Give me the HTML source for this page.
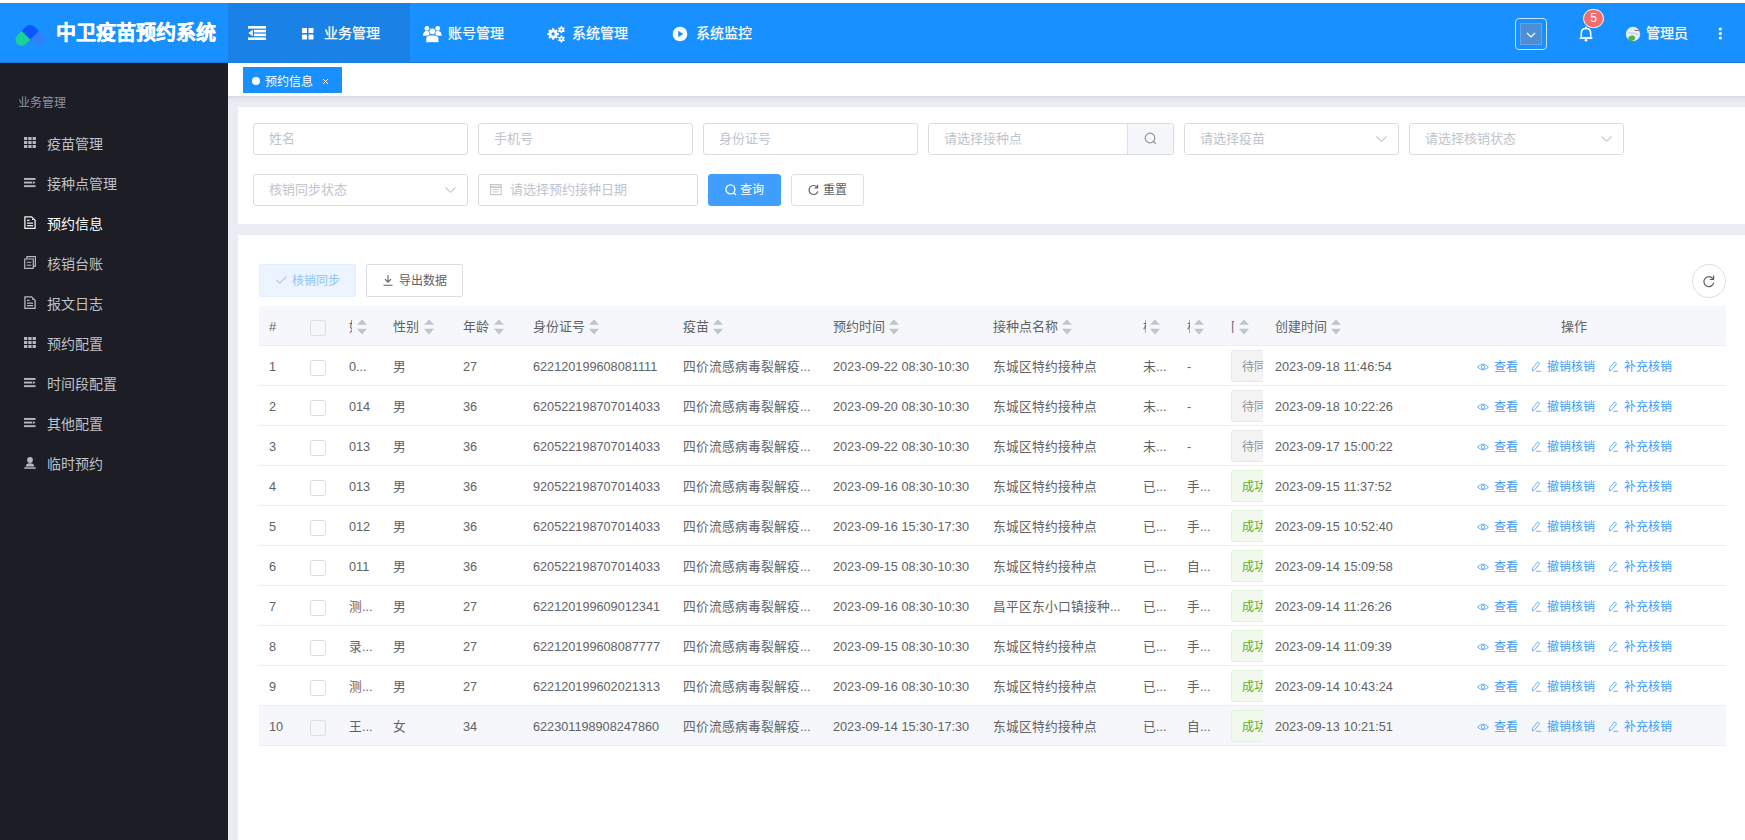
<!DOCTYPE html><html lang="zh-CN"><head><meta charset="utf-8"><style>
*{box-sizing:border-box;margin:0;padding:0}
html,body{width:1745px;height:840px;overflow:hidden;background:#fff;font-family:"Liberation Sans",sans-serif;color:#606266}
.a{position:absolute}
svg{position:absolute;overflow:visible}
#header{position:absolute;left:0;top:3px;width:1745px;height:60px;background:#1890ff;border-bottom:1px solid #1878d8}
#sidebar{position:absolute;left:0;top:63px;width:228px;height:777px;background:#1c1d25}
#tabs{position:absolute;left:228px;top:63px;width:1517px;height:33px;background:#fff}
#main{position:absolute;left:228px;top:96px;width:1517px;height:744px;background:linear-gradient(#d6d9e0 0px,#e3e6ee 3px,#eaedf4 8px,#eaedf4 100%)}
.card{position:absolute;background:#fff}
.nav{position:absolute;top:0;height:60px;color:#fff;font-size:14px;line-height:60px;white-space:nowrap;-webkit-text-stroke:0.25px #fff}
.si{position:absolute;left:0;width:228px;height:40px;line-height:40px;font-size:14px;color:#bfc2c9}
.si .t{position:absolute;left:47px;top:0.5px}
.inp{position:absolute;height:32px;border:1px solid #dadcdf;border-radius:3px;background:#fff;font-size:13px;color:#c0c4cc;line-height:30px;padding-left:15px;white-space:nowrap}
.btn{position:absolute;height:32px;border-radius:3px;font-size:12.5px;line-height:30px;white-space:nowrap}
.tx{position:absolute;white-space:nowrap;font-size:12.7px;line-height:16px;color:#606266}
.th{position:absolute;white-space:nowrap;font-size:13px;line-height:16px;color:#606266}
.hl{position:absolute;left:259px;width:1467px;height:1px;background:#ebeef5}
.cb{position:absolute;width:16px;height:16px;border:1.5px solid #dcdde0;border-radius:2.5px;background:transparent}
.tag{position:absolute;height:32px;border-radius:4px;font-size:12px;line-height:33px;padding-left:10px;white-space:nowrap;overflow:hidden}
.clip{position:absolute;overflow:hidden;white-space:nowrap}
.lk{position:absolute;white-space:nowrap;font-size:12px;line-height:16px;color:#409eff}
</style></head><body>
<div id="header">
<svg style="left:0px;top:-3px" width="50" height="50" viewBox="0 0 50 50">
<path d="M38.8 31 L30.3 39.5 L34.9 44.1 A6 6 0 0 0 43.4 35.6 Z" fill="#6a5cf0" opacity="0.3"/>
<path d="M21.8 31 L30.3 39.5 L25.7 44.1 A6 6 0 0 1 17.2 35.6 Z" fill="#17d39b"/>
<path d="M30.3 39.5 L21.8 31 L26.06 26.74 A6 6 0 0 1 34.54 26.74 L38.8 31 Z" fill="#0a56ff"/>
</svg>
<div class="a" style="left:56px;top:0;height:60px;line-height:60px;color:#fff;font-size:20px;font-weight:bold;-webkit-text-stroke:0.4px #fff">中卫疫苗预约系统</div>
<div class="a" style="left:228px;top:0;width:182px;height:60px;background:#1a82e6"></div>
<svg style="left:248px;top:23px" width="18" height="14" viewBox="0 0 18 14" fill="#fff">
<rect x="0" y="0" width="18" height="2.6"/><rect x="6" y="3.8" width="12" height="2.6"/><rect x="6" y="7.6" width="12" height="2.6"/><rect x="0" y="11.4" width="18" height="2.6"/>
<path d="M4.8 3.8 L0.3 7 L4.8 10.2Z"/></svg>
<svg style="left:302px;top:25px" width="12" height="12" viewBox="0 0 12 12" fill="#fff">
<rect x="0" y="0" width="5" height="5" rx=".6"/><rect x="6.5" y="0" width="5" height="5" rx=".6"/><rect x="0" y="6.5" width="5" height="5" rx=".6"/><rect x="6.5" y="6.5" width="5" height="5" rx=".6"/></svg>
<div class="nav" style="left:324px">业务管理</div>
<svg style="left:423px;top:22px" width="19" height="18" viewBox="0 0 19 18" fill="#fff">
<circle cx="3.9" cy="3.4" r="2.4"/><circle cx="14.7" cy="3.4" r="2.4"/>
<path d="M0 10.7 Q0 5.9 3.9 5.9 Q5.6 5.9 6.4 7 L6.4 10.7Z"/>
<path d="M18.7 10.7 Q18.7 5.9 14.8 5.9 Q13.1 5.9 12.3 7 L12.3 10.7Z"/>
<circle cx="9.35" cy="6.4" r="3.3" stroke="#1890ff" stroke-width="0.7"/>
<path d="M2.9 17.6 L2.9 13.8 Q2.9 10.1 9.35 10.1 Q15.8 10.1 15.8 13.8 L15.8 17.6Z" stroke="#1890ff" stroke-width="0.7"/>
</svg>
<div class="nav" style="left:448px">账号管理</div>
<svg style="left:547px;top:22px" width="18" height="18" viewBox="0 0 18 18" fill="#fff">
<g transform="translate(6.1 9)"><circle r="4.3"/><rect x="-1.15" y="-5.7" width="2.3" height="11.4" transform="rotate(0)"/><rect x="-1.15" y="-5.7" width="2.3" height="11.4" transform="rotate(45)"/><rect x="-1.15" y="-5.7" width="2.3" height="11.4" transform="rotate(90)"/><rect x="-1.15" y="-5.7" width="2.3" height="11.4" transform="rotate(135)"/><circle r="1.7" fill="#1890ff"/></g>
<g transform="translate(14.4 4.7)"><circle r="2.5"/><rect x="-0.75" y="-3.6" width="1.5" height="7.2" transform="rotate(0)"/><rect x="-0.75" y="-3.6" width="1.5" height="7.2" transform="rotate(60)"/><rect x="-0.75" y="-3.6" width="1.5" height="7.2" transform="rotate(120)"/><circle r="0.9" fill="#1890ff"/></g><g transform="translate(14.4 13.9)"><circle r="2.5"/><rect x="-0.75" y="-3.6" width="1.5" height="7.2" transform="rotate(0)"/><rect x="-0.75" y="-3.6" width="1.5" height="7.2" transform="rotate(60)"/><rect x="-0.75" y="-3.6" width="1.5" height="7.2" transform="rotate(120)"/><circle r="0.9" fill="#1890ff"/></g>
</svg>
<div class="nav" style="left:572px">系统管理</div>
<svg style="left:672px;top:23px" width="16" height="16" viewBox="0 0 16 16">
<circle cx="8" cy="8" r="7.3" fill="#fff"/><path d="M6.2 4.8 L11.2 8 L6.2 11.2Z" fill="#1890ff"/></svg>
<div class="nav" style="left:696px">系统监控</div>
<div class="a" style="left:1515px;top:15px;width:32px;height:32px;border:1px solid #c6e2ff;border-radius:4px"></div>
<div class="a" style="left:1520px;top:20px;width:22px;height:22px;background:#4d8fd6;border:1px solid #6aa3e0"></div>
<svg style="left:1526px;top:29px" width="10" height="6" viewBox="0 0 10 6"><path d="M1 1 L5 5 L9 1" stroke="#fff" stroke-width="1.2" fill="none"/></svg>
<svg style="left:1579px;top:23px" width="14" height="16" viewBox="0 0 14 16" fill="none" stroke="#fff" stroke-width="1.5">
<path d="M2.3 12 L2.3 7.2 Q2.3 2.5 7 2.5 Q11.7 2.5 11.7 7.2 L11.7 12Z" stroke-linejoin="round"/><path d="M0.6 12.3 L13.4 12.3"/>
<circle cx="7" cy="14.2" r="1.3" fill="#fff" stroke="none"/><circle cx="7" cy="1.6" r="1" fill="#fff" stroke="none"/></svg>
<div class="a" style="left:1583px;top:6px;width:21px;height:19px;border-radius:10px;background:#f56c6c;border:1px solid #fff;color:#fff;font-size:12px;line-height:17px;text-align:center">5</div>
<svg style="left:1625px;top:23px" width="16" height="16" viewBox="0 0 16 16">
<circle cx="8" cy="8" r="7.2" fill="#e6f0fb"/><path d="M2.6 7 Q8 6.5 14 8.5" stroke="#cfd3f0" stroke-width="1.6" fill="none"/><path d="M3.2 12.5 Q4 9 8 9.5 Q10.5 10 10 13 Q8.5 15.5 5.5 15 Q3.8 14.3 3.2 12.5Z" fill="#4cb53a"/>
<path d="M9.5 4.3 L14 4.6" stroke="#8a6a50" stroke-width="1" fill="none"/></svg>
<div class="a" style="left:1646px;top:0;height:60px;line-height:60px;color:#fff;font-size:14px;-webkit-text-stroke:0.25px #fff">管理员</div>
<svg style="left:1718px;top:23px" width="5" height="15" viewBox="0 0 5 15" fill="#fff"><circle cx="2.3" cy="3" r="1.6"/><circle cx="2.3" cy="7.5" r="1.6"/><circle cx="2.3" cy="12" r="1.6"/></svg>
</div>
<div id="sidebar">
<div class="a" style="left:18px;top:30px;font-size:12px;color:#8f929a;line-height:20px">业务管理</div>
<div class="si" style="top:60px;color:#bfc2c9"><span class="t">疫苗管理</span>
<svg style="left:24px;top:14px" width="12" height="11" viewBox="0 0 12 11" fill="#b5b8bf"><rect x="0" y="0" width="3.3" height="3" /><rect x="4.3" y="0" width="3.3" height="3"/><rect x="8.6" y="0" width="3.3" height="3"/><rect x="0" y="4" width="3.3" height="3"/><rect x="4.3" y="4" width="3.3" height="3"/><rect x="8.6" y="4" width="3.3" height="3"/><rect x="0" y="8" width="3.3" height="3"/><rect x="4.3" y="8" width="3.3" height="3"/><rect x="8.6" y="8" width="3.3" height="3"/></svg>
</div>
<div class="si" style="top:100px;color:#bfc2c9"><span class="t">接种点管理</span>
<svg style="left:24px;top:15px" width="12" height="10" viewBox="0 0 12 10" fill="#b5b8bf"><rect x="0" y="0" width="11.5" height="1.9"/><rect x="0" y="3.6" width="8.3" height="1.9"/><path d="M9 3.2 L11.6 4.55 L9 5.9Z"/><rect x="0" y="7.2" width="11.5" height="1.9"/></svg>
</div>
<div class="si" style="top:140px;color:#fff"><span class="t">预约信息</span>
<svg style="left:24px;top:13px" width="12" height="13" viewBox="0 0 12 13" fill="none" stroke="#f0f0f0" stroke-width="1.3"><path d="M0.9 0.8 H7.6 L11.1 4.3 V12.3 H0.9Z"/><path d="M3 4.3 H5.6 M3 7.1 H9 M3 9.6 H9" stroke-width="1.2"/><circle cx="8.6" cy="3.4" r="0.6" fill="#f0f0f0" stroke="none"/></svg>
</div>
<div class="si" style="top:180px;color:#bfc2c9"><span class="t">核销台账</span>
<svg style="left:24px;top:13px" width="12" height="13" viewBox="0 0 12 13" fill="none" stroke="#b5b8bf" stroke-width="1.2"><path d="M0.7 3 H9.3 V12.3 H0.7Z"/><path d="M2.9 3 V0.7 H11.4 V10.2 H9.3"/><path d="M2.7 6.3 H7.3 M2.7 9.2 H7.3" stroke-width="1"/></svg>
</div>
<div class="si" style="top:220px;color:#bfc2c9"><span class="t">报文日志</span>
<svg style="left:24px;top:13px" width="12" height="13" viewBox="0 0 12 13" fill="none" stroke="#b5b8bf" stroke-width="1.3"><path d="M0.9 0.8 H7.6 L11.1 4.3 V12.3 H0.9Z"/><path d="M3 4.3 H5.6 M3 7.1 H9 M3 9.6 H9" stroke-width="1.2"/><circle cx="8.6" cy="3.4" r="0.6" fill="#b5b8bf" stroke="none"/></svg>
</div>
<div class="si" style="top:260px;color:#bfc2c9"><span class="t">预约配置</span>
<svg style="left:24px;top:14px" width="12" height="11" viewBox="0 0 12 11" fill="#b5b8bf"><rect x="0" y="0" width="3.3" height="3" /><rect x="4.3" y="0" width="3.3" height="3"/><rect x="8.6" y="0" width="3.3" height="3"/><rect x="0" y="4" width="3.3" height="3"/><rect x="4.3" y="4" width="3.3" height="3"/><rect x="8.6" y="4" width="3.3" height="3"/><rect x="0" y="8" width="3.3" height="3"/><rect x="4.3" y="8" width="3.3" height="3"/><rect x="8.6" y="8" width="3.3" height="3"/></svg>
</div>
<div class="si" style="top:300px;color:#bfc2c9"><span class="t">时间段配置</span>
<svg style="left:24px;top:15px" width="12" height="10" viewBox="0 0 12 10" fill="#b5b8bf"><rect x="0" y="0" width="11.5" height="1.9"/><rect x="0" y="3.6" width="8.3" height="1.9"/><path d="M9 3.2 L11.6 4.55 L9 5.9Z"/><rect x="0" y="7.2" width="11.5" height="1.9"/></svg>
</div>
<div class="si" style="top:340px;color:#bfc2c9"><span class="t">其他配置</span>
<svg style="left:24px;top:15px" width="12" height="10" viewBox="0 0 12 10" fill="#b5b8bf"><rect x="0" y="0" width="11.5" height="1.9"/><rect x="0" y="3.6" width="8.3" height="1.9"/><path d="M9 3.2 L11.6 4.55 L9 5.9Z"/><rect x="0" y="7.2" width="11.5" height="1.9"/></svg>
</div>
<div class="si" style="top:380px;color:#bfc2c9"><span class="t">临时预约</span>
<svg style="left:24px;top:14px" width="12" height="12" viewBox="0 0 12 12" fill="#b5b8bf"><circle cx="6" cy="3" r="2.9"/><path d="M1.8 9.6 Q1.8 6.3 6 6.3 Q10.2 6.3 10.2 9.6Z"/><rect x="0.3" y="10.3" width="11.4" height="1.5"/></svg>
</div>
</div>
<div id="tabs">
<div class="a" style="left:15px;top:4px;width:99px;height:26px;background:#1890ff"></div>
<div class="a" style="left:24px;top:14px;width:8px;height:8px;border-radius:50%;background:#fff"></div>
<div class="a" style="left:37px;top:7px;height:25px;line-height:25px;color:#fff;font-size:12px">预约信息</div>
<svg style="left:95px;top:16px" width="5" height="5" viewBox="0 0 5 5" stroke="#fff" stroke-width="1"><path d="M0 0 L5 5 M5 0 L0 5"/></svg>
</div>
<div id="main"></div>
<div class="card" style="left:238px;top:107px;width:1507px;height:117px"></div>
<div class="card" style="left:238px;top:235px;width:1507px;height:605px"></div>
<div class="inp" style="left:253px;top:123px;width:215px">姓名</div>
<div class="inp" style="left:478px;top:123px;width:215px">手机号</div>
<div class="inp" style="left:703px;top:123px;width:215px">身份证号</div>
<div class="inp" style="left:928px;top:123px;width:246px;">请选择接种点</div>
<div class="a" style="left:1127px;top:124px;width:46px;height:30px;background:#f5f7fa;border-left:1px solid #dcdfe6;border-radius:0 4px 4px 0"></div>
<svg style="left:1144px;top:132px" width="13" height="13" viewBox="0 0 13 13" fill="none" stroke="#909399" stroke-width="1.2"><circle cx="6" cy="6" r="4.8"/><path d="M9.5 9.5 L11.8 11.8"/></svg>
<div class="inp" style="left:1184px;top:123px;width:215px">请选择疫苗</div>
<svg style="left:1376px;top:136px" width="11" height="6" viewBox="0 0 11 6"><path d="M0.5 0.5 L5.5 5.3 L10.5 0.5" stroke="#c0c4cc" stroke-width="1.1" fill="none"/></svg>
<div class="inp" style="left:1409px;top:123px;width:215px">请选择核销状态</div>
<svg style="left:1601px;top:136px" width="11" height="6" viewBox="0 0 11 6"><path d="M0.5 0.5 L5.5 5.3 L10.5 0.5" stroke="#c0c4cc" stroke-width="1.1" fill="none"/></svg>
<div class="inp" style="left:253px;top:174px;width:215px">核销同步状态</div>
<svg style="left:445px;top:187px" width="11" height="6" viewBox="0 0 11 6"><path d="M0.5 0.5 L5.5 5.3 L10.5 0.5" stroke="#c0c4cc" stroke-width="1.1" fill="none"/></svg>
<div class="inp" style="left:478px;top:174px;width:220px;padding-left:31px">请选择预约接种日期</div>
<svg style="left:490px;top:184px" width="12" height="12" viewBox="0 0 12 12" fill="none" stroke="#c0c4cc" stroke-width="1.1"><rect x="0.6" y="0.6" width="10.6" height="10"/><path d="M0.6 3.2 H11.2" stroke-width="1.6"/><path d="M2.8 5.6 H9 M2.8 7.9 H9" stroke-width="0.9"/></svg>
<div class="btn" style="left:708px;top:174px;width:73px;background:#409eff;border:1px solid #409eff;color:#fff"></div>
<svg style="left:725px;top:184px" width="12" height="12" viewBox="0 0 12 12" fill="none" stroke="#fff" stroke-width="1.3"><circle cx="5.4" cy="5.4" r="4.5"/><path d="M8.7 8.7 L11 11"/></svg>
<div class="a" style="left:740px;top:174px;height:32px;line-height:32px;color:#fff;font-size:12px">查询</div>
<div class="btn" style="left:791px;top:174px;width:73px;background:#fff;border:1px solid #dcdfe6"></div>
<svg style="left:808px;top:184px" width="11" height="12" viewBox="0 0 11 12" fill="none" stroke="#606266" stroke-width="1.2"><path d="M9.3 3.5 A4.5 4.5 0 1 0 9.8 7.5"/><path d="M9.6 0.8 L9.6 3.8 L6.6 3.8" /></svg>
<div class="a" style="left:823px;top:174px;height:32px;line-height:32px;color:#606266;font-size:12px">重置</div>
<div class="btn" style="left:259px;top:264px;width:97px;height:33px;background:#ecf5ff;border:1px solid #e3effc;border-radius:2px"></div>
<svg style="left:276px;top:276px" width="11" height="8" viewBox="0 0 11 8" fill="none" stroke="#c0c8d4" stroke-width="1.2"><path d="M0.5 4 L3.8 7.2 L10.5 0.5"/></svg>
<div class="a" style="left:292px;top:265px;height:33px;line-height:33px;color:#8fc3f7;font-size:12px">核销同步</div>
<div class="btn" style="left:366px;top:264px;width:97px;height:33px;background:#fff;border:1px solid #dcdfe6;border-radius:2px"></div>
<svg style="left:383px;top:275px" width="10" height="11" viewBox="0 0 10 11" fill="none" stroke="#606266" stroke-width="1.1"><path d="M5 0 V7 M2 4.2 L5 7.2 L8 4.2 M0.5 10.3 H9.5"/></svg>
<div class="a" style="left:399px;top:265px;height:33px;line-height:33px;color:#606266;font-size:12px">导出数据</div>
<div class="a" style="left:1692px;top:264px;width:34px;height:34px;border:1px solid #dcdfe6;border-radius:50%;background:#fff"></div>
<svg style="left:1703px;top:275px" width="12" height="12" viewBox="0 0 12 12" fill="none" stroke="#606266" stroke-width="1.2"><path d="M10.3 4.2 A5 5 0 1 0 10.8 7.6"/><path d="M10.6 0.6 L10.6 4.4 L6.8 4.4"/></svg>
<div class="a" style="left:259px;top:306px;width:1467px;height:40px;background:#f5f7fa"></div>
<div class="a" style="left:259px;top:705px;width:1467px;height:40px;background:#f5f7fa"></div>
<div class="hl" style="top:345px"></div>
<div class="hl" style="top:385px"></div>
<div class="hl" style="top:425px"></div>
<div class="hl" style="top:465px"></div>
<div class="hl" style="top:505px"></div>
<div class="hl" style="top:545px"></div>
<div class="hl" style="top:585px"></div>
<div class="hl" style="top:625px"></div>
<div class="hl" style="top:665px"></div>
<div class="hl" style="top:705px"></div>
<div class="hl" style="top:745px"></div>
<div class="th" style="left:269px;top:319px">#</div>
<div class="cb" style="left:310px;top:320px"></div>
<div class="clip th" style="left:349px;top:319px;width:3px">姓名</div>
<svg style="left:357px;top:318px" width="10" height="16" viewBox="0 0 10 16" fill="#c0c4cc"><path d="M0 6.8 L5 1.4 L10 6.8Z"/><path d="M0 10.8 L5 16.6 L10 10.8Z"/></svg>
<div class="th" style="left:393px;top:319px">性别</div>
<svg style="left:424px;top:318px" width="10" height="16" viewBox="0 0 10 16" fill="#c0c4cc"><path d="M0 6.8 L5 1.4 L10 6.8Z"/><path d="M0 10.8 L5 16.6 L10 10.8Z"/></svg>
<div class="th" style="left:463px;top:319px">年龄</div>
<svg style="left:494px;top:318px" width="10" height="16" viewBox="0 0 10 16" fill="#c0c4cc"><path d="M0 6.8 L5 1.4 L10 6.8Z"/><path d="M0 10.8 L5 16.6 L10 10.8Z"/></svg>
<div class="th" style="left:533px;top:319px">身份证号</div>
<svg style="left:589px;top:318px" width="10" height="16" viewBox="0 0 10 16" fill="#c0c4cc"><path d="M0 6.8 L5 1.4 L10 6.8Z"/><path d="M0 10.8 L5 16.6 L10 10.8Z"/></svg>
<div class="th" style="left:683px;top:319px">疫苗</div>
<svg style="left:713px;top:318px" width="10" height="16" viewBox="0 0 10 16" fill="#c0c4cc"><path d="M0 6.8 L5 1.4 L10 6.8Z"/><path d="M0 10.8 L5 16.6 L10 10.8Z"/></svg>
<div class="th" style="left:833px;top:319px">预约时间</div>
<svg style="left:889px;top:318px" width="10" height="16" viewBox="0 0 10 16" fill="#c0c4cc"><path d="M0 6.8 L5 1.4 L10 6.8Z"/><path d="M0 10.8 L5 16.6 L10 10.8Z"/></svg>
<div class="th" style="left:993px;top:319px">接种点名称</div>
<svg style="left:1062px;top:318px" width="10" height="16" viewBox="0 0 10 16" fill="#c0c4cc"><path d="M0 6.8 L5 1.4 L10 6.8Z"/><path d="M0 10.8 L5 16.6 L10 10.8Z"/></svg>
<div class="th" style="left:1275px;top:319px">创建时间</div>
<svg style="left:1331px;top:318px" width="10" height="16" viewBox="0 0 10 16" fill="#c0c4cc"><path d="M0 6.8 L5 1.4 L10 6.8Z"/><path d="M0 10.8 L5 16.6 L10 10.8Z"/></svg>
<div class="clip th" style="left:1143px;top:319px;width:3px">核销</div>
<svg style="left:1150px;top:318px" width="10" height="16" viewBox="0 0 10 16" fill="#c0c4cc"><path d="M0 6.8 L5 1.4 L10 6.8Z"/><path d="M0 10.8 L5 16.6 L10 10.8Z"/></svg>
<div class="clip th" style="left:1187px;top:319px;width:3px">核销</div>
<svg style="left:1194px;top:318px" width="10" height="16" viewBox="0 0 10 16" fill="#c0c4cc"><path d="M0 6.8 L5 1.4 L10 6.8Z"/><path d="M0 10.8 L5 16.6 L10 10.8Z"/></svg>
<div class="clip th" style="left:1231px;top:319px;width:3px">同步</div>
<svg style="left:1239px;top:318px" width="10" height="16" viewBox="0 0 10 16" fill="#c0c4cc"><path d="M0 6.8 L5 1.4 L10 6.8Z"/><path d="M0 10.8 L5 16.6 L10 10.8Z"/></svg>
<div class="th" style="left:1561px;top:319px">操作</div>
<div class="tx" style="left:269px;top:359px">1</div>
<div class="cb" style="left:310px;top:360px"></div>
<div class="tx" style="left:349px;top:359px">0...</div>
<div class="tx" style="left:393px;top:359px">男</div>
<div class="tx" style="left:463px;top:359px">27</div>
<div class="tx" style="left:533px;top:359px">622120199608081111</div>
<div class="tx" style="left:683px;top:359px">四价流感病毒裂解疫...</div>
<div class="tx" style="left:833px;top:359px">2023-09-22 08:30-10:30</div>
<div class="tx" style="left:993px;top:359px">东城区特约接种点</div>
<div class="tx" style="left:1143px;top:359px">未...</div>
<div class="tx" style="left:1187px;top:359px">-</div>
<div class="tag" style="left:1231px;top:350px;width:32px;background:#f4f4f5;border:1px solid #e9e9eb;border-right:0;color:#909399;border-radius:3px 0 0 3px">待同步</div>
<div class="tx" style="left:1275px;top:359px">2023-09-18 11:46:54</div>
<svg style="left:1477px;top:363px" width="12" height="8" viewBox="0 0 12 8" fill="none" stroke="#5aa9f7" stroke-width="0.9"><path d="M0.5 4 Q6 -1.6 11.5 4 Q6 9.6 0.5 4Z"/><circle cx="6" cy="4" r="1.8"/></svg>
<div class="lk" style="left:1494px;top:359px">查看</div>
<svg style="left:1531px;top:361px" width="11" height="11" viewBox="0 0 11 11" fill="none" stroke="#5aa9f7" stroke-width="0.9" stroke-linejoin="round"><path d="M1.3 10 L1.5 7.2 L6.6 0.9 L8.7 2.6 L3.6 8.9Z"/><path d="M5.2 10.3 H10.2"/></svg>
<div class="lk" style="left:1547px;top:359px">撤销核销</div>
<svg style="left:1608px;top:361px" width="11" height="11" viewBox="0 0 11 11" fill="none" stroke="#5aa9f7" stroke-width="0.9" stroke-linejoin="round"><path d="M1.3 10 L1.5 7.2 L6.6 0.9 L8.7 2.6 L3.6 8.9Z"/><path d="M5.2 10.3 H10.2"/></svg>
<div class="lk" style="left:1624px;top:359px">补充核销</div>
<div class="tx" style="left:269px;top:399px">2</div>
<div class="cb" style="left:310px;top:400px"></div>
<div class="tx" style="left:349px;top:399px">014</div>
<div class="tx" style="left:393px;top:399px">男</div>
<div class="tx" style="left:463px;top:399px">36</div>
<div class="tx" style="left:533px;top:399px">620522198707014033</div>
<div class="tx" style="left:683px;top:399px">四价流感病毒裂解疫...</div>
<div class="tx" style="left:833px;top:399px">2023-09-20 08:30-10:30</div>
<div class="tx" style="left:993px;top:399px">东城区特约接种点</div>
<div class="tx" style="left:1143px;top:399px">未...</div>
<div class="tx" style="left:1187px;top:399px">-</div>
<div class="tag" style="left:1231px;top:390px;width:32px;background:#f4f4f5;border:1px solid #e9e9eb;border-right:0;color:#909399;border-radius:3px 0 0 3px">待同步</div>
<div class="tx" style="left:1275px;top:399px">2023-09-18 10:22:26</div>
<svg style="left:1477px;top:403px" width="12" height="8" viewBox="0 0 12 8" fill="none" stroke="#5aa9f7" stroke-width="0.9"><path d="M0.5 4 Q6 -1.6 11.5 4 Q6 9.6 0.5 4Z"/><circle cx="6" cy="4" r="1.8"/></svg>
<div class="lk" style="left:1494px;top:399px">查看</div>
<svg style="left:1531px;top:401px" width="11" height="11" viewBox="0 0 11 11" fill="none" stroke="#5aa9f7" stroke-width="0.9" stroke-linejoin="round"><path d="M1.3 10 L1.5 7.2 L6.6 0.9 L8.7 2.6 L3.6 8.9Z"/><path d="M5.2 10.3 H10.2"/></svg>
<div class="lk" style="left:1547px;top:399px">撤销核销</div>
<svg style="left:1608px;top:401px" width="11" height="11" viewBox="0 0 11 11" fill="none" stroke="#5aa9f7" stroke-width="0.9" stroke-linejoin="round"><path d="M1.3 10 L1.5 7.2 L6.6 0.9 L8.7 2.6 L3.6 8.9Z"/><path d="M5.2 10.3 H10.2"/></svg>
<div class="lk" style="left:1624px;top:399px">补充核销</div>
<div class="tx" style="left:269px;top:439px">3</div>
<div class="cb" style="left:310px;top:440px"></div>
<div class="tx" style="left:349px;top:439px">013</div>
<div class="tx" style="left:393px;top:439px">男</div>
<div class="tx" style="left:463px;top:439px">36</div>
<div class="tx" style="left:533px;top:439px">620522198707014033</div>
<div class="tx" style="left:683px;top:439px">四价流感病毒裂解疫...</div>
<div class="tx" style="left:833px;top:439px">2023-09-22 08:30-10:30</div>
<div class="tx" style="left:993px;top:439px">东城区特约接种点</div>
<div class="tx" style="left:1143px;top:439px">未...</div>
<div class="tx" style="left:1187px;top:439px">-</div>
<div class="tag" style="left:1231px;top:430px;width:32px;background:#f4f4f5;border:1px solid #e9e9eb;border-right:0;color:#909399;border-radius:3px 0 0 3px">待同步</div>
<div class="tx" style="left:1275px;top:439px">2023-09-17 15:00:22</div>
<svg style="left:1477px;top:443px" width="12" height="8" viewBox="0 0 12 8" fill="none" stroke="#5aa9f7" stroke-width="0.9"><path d="M0.5 4 Q6 -1.6 11.5 4 Q6 9.6 0.5 4Z"/><circle cx="6" cy="4" r="1.8"/></svg>
<div class="lk" style="left:1494px;top:439px">查看</div>
<svg style="left:1531px;top:441px" width="11" height="11" viewBox="0 0 11 11" fill="none" stroke="#5aa9f7" stroke-width="0.9" stroke-linejoin="round"><path d="M1.3 10 L1.5 7.2 L6.6 0.9 L8.7 2.6 L3.6 8.9Z"/><path d="M5.2 10.3 H10.2"/></svg>
<div class="lk" style="left:1547px;top:439px">撤销核销</div>
<svg style="left:1608px;top:441px" width="11" height="11" viewBox="0 0 11 11" fill="none" stroke="#5aa9f7" stroke-width="0.9" stroke-linejoin="round"><path d="M1.3 10 L1.5 7.2 L6.6 0.9 L8.7 2.6 L3.6 8.9Z"/><path d="M5.2 10.3 H10.2"/></svg>
<div class="lk" style="left:1624px;top:439px">补充核销</div>
<div class="tx" style="left:269px;top:479px">4</div>
<div class="cb" style="left:310px;top:480px"></div>
<div class="tx" style="left:349px;top:479px">013</div>
<div class="tx" style="left:393px;top:479px">男</div>
<div class="tx" style="left:463px;top:479px">36</div>
<div class="tx" style="left:533px;top:479px">920522198707014033</div>
<div class="tx" style="left:683px;top:479px">四价流感病毒裂解疫...</div>
<div class="tx" style="left:833px;top:479px">2023-09-16 08:30-10:30</div>
<div class="tx" style="left:993px;top:479px">东城区特约接种点</div>
<div class="tx" style="left:1143px;top:479px">已...</div>
<div class="tx" style="left:1187px;top:479px">手...</div>
<div class="tag" style="left:1231px;top:470px;width:32px;background:#f0f9eb;border:1px solid #e1f3d8;border-right:0;color:#5daf34;border-radius:3px 0 0 3px">成功</div>
<div class="tx" style="left:1275px;top:479px">2023-09-15 11:37:52</div>
<svg style="left:1477px;top:483px" width="12" height="8" viewBox="0 0 12 8" fill="none" stroke="#5aa9f7" stroke-width="0.9"><path d="M0.5 4 Q6 -1.6 11.5 4 Q6 9.6 0.5 4Z"/><circle cx="6" cy="4" r="1.8"/></svg>
<div class="lk" style="left:1494px;top:479px">查看</div>
<svg style="left:1531px;top:481px" width="11" height="11" viewBox="0 0 11 11" fill="none" stroke="#5aa9f7" stroke-width="0.9" stroke-linejoin="round"><path d="M1.3 10 L1.5 7.2 L6.6 0.9 L8.7 2.6 L3.6 8.9Z"/><path d="M5.2 10.3 H10.2"/></svg>
<div class="lk" style="left:1547px;top:479px">撤销核销</div>
<svg style="left:1608px;top:481px" width="11" height="11" viewBox="0 0 11 11" fill="none" stroke="#5aa9f7" stroke-width="0.9" stroke-linejoin="round"><path d="M1.3 10 L1.5 7.2 L6.6 0.9 L8.7 2.6 L3.6 8.9Z"/><path d="M5.2 10.3 H10.2"/></svg>
<div class="lk" style="left:1624px;top:479px">补充核销</div>
<div class="tx" style="left:269px;top:519px">5</div>
<div class="cb" style="left:310px;top:520px"></div>
<div class="tx" style="left:349px;top:519px">012</div>
<div class="tx" style="left:393px;top:519px">男</div>
<div class="tx" style="left:463px;top:519px">36</div>
<div class="tx" style="left:533px;top:519px">620522198707014033</div>
<div class="tx" style="left:683px;top:519px">四价流感病毒裂解疫...</div>
<div class="tx" style="left:833px;top:519px">2023-09-16 15:30-17:30</div>
<div class="tx" style="left:993px;top:519px">东城区特约接种点</div>
<div class="tx" style="left:1143px;top:519px">已...</div>
<div class="tx" style="left:1187px;top:519px">手...</div>
<div class="tag" style="left:1231px;top:510px;width:32px;background:#f0f9eb;border:1px solid #e1f3d8;border-right:0;color:#5daf34;border-radius:3px 0 0 3px">成功</div>
<div class="tx" style="left:1275px;top:519px">2023-09-15 10:52:40</div>
<svg style="left:1477px;top:523px" width="12" height="8" viewBox="0 0 12 8" fill="none" stroke="#5aa9f7" stroke-width="0.9"><path d="M0.5 4 Q6 -1.6 11.5 4 Q6 9.6 0.5 4Z"/><circle cx="6" cy="4" r="1.8"/></svg>
<div class="lk" style="left:1494px;top:519px">查看</div>
<svg style="left:1531px;top:521px" width="11" height="11" viewBox="0 0 11 11" fill="none" stroke="#5aa9f7" stroke-width="0.9" stroke-linejoin="round"><path d="M1.3 10 L1.5 7.2 L6.6 0.9 L8.7 2.6 L3.6 8.9Z"/><path d="M5.2 10.3 H10.2"/></svg>
<div class="lk" style="left:1547px;top:519px">撤销核销</div>
<svg style="left:1608px;top:521px" width="11" height="11" viewBox="0 0 11 11" fill="none" stroke="#5aa9f7" stroke-width="0.9" stroke-linejoin="round"><path d="M1.3 10 L1.5 7.2 L6.6 0.9 L8.7 2.6 L3.6 8.9Z"/><path d="M5.2 10.3 H10.2"/></svg>
<div class="lk" style="left:1624px;top:519px">补充核销</div>
<div class="tx" style="left:269px;top:559px">6</div>
<div class="cb" style="left:310px;top:560px"></div>
<div class="tx" style="left:349px;top:559px">011</div>
<div class="tx" style="left:393px;top:559px">男</div>
<div class="tx" style="left:463px;top:559px">36</div>
<div class="tx" style="left:533px;top:559px">620522198707014033</div>
<div class="tx" style="left:683px;top:559px">四价流感病毒裂解疫...</div>
<div class="tx" style="left:833px;top:559px">2023-09-15 08:30-10:30</div>
<div class="tx" style="left:993px;top:559px">东城区特约接种点</div>
<div class="tx" style="left:1143px;top:559px">已...</div>
<div class="tx" style="left:1187px;top:559px">自...</div>
<div class="tag" style="left:1231px;top:550px;width:32px;background:#f0f9eb;border:1px solid #e1f3d8;border-right:0;color:#5daf34;border-radius:3px 0 0 3px">成功</div>
<div class="tx" style="left:1275px;top:559px">2023-09-14 15:09:58</div>
<svg style="left:1477px;top:563px" width="12" height="8" viewBox="0 0 12 8" fill="none" stroke="#5aa9f7" stroke-width="0.9"><path d="M0.5 4 Q6 -1.6 11.5 4 Q6 9.6 0.5 4Z"/><circle cx="6" cy="4" r="1.8"/></svg>
<div class="lk" style="left:1494px;top:559px">查看</div>
<svg style="left:1531px;top:561px" width="11" height="11" viewBox="0 0 11 11" fill="none" stroke="#5aa9f7" stroke-width="0.9" stroke-linejoin="round"><path d="M1.3 10 L1.5 7.2 L6.6 0.9 L8.7 2.6 L3.6 8.9Z"/><path d="M5.2 10.3 H10.2"/></svg>
<div class="lk" style="left:1547px;top:559px">撤销核销</div>
<svg style="left:1608px;top:561px" width="11" height="11" viewBox="0 0 11 11" fill="none" stroke="#5aa9f7" stroke-width="0.9" stroke-linejoin="round"><path d="M1.3 10 L1.5 7.2 L6.6 0.9 L8.7 2.6 L3.6 8.9Z"/><path d="M5.2 10.3 H10.2"/></svg>
<div class="lk" style="left:1624px;top:559px">补充核销</div>
<div class="tx" style="left:269px;top:599px">7</div>
<div class="cb" style="left:310px;top:600px"></div>
<div class="tx" style="left:349px;top:599px">测...</div>
<div class="tx" style="left:393px;top:599px">男</div>
<div class="tx" style="left:463px;top:599px">27</div>
<div class="tx" style="left:533px;top:599px">622120199609012341</div>
<div class="tx" style="left:683px;top:599px">四价流感病毒裂解疫...</div>
<div class="tx" style="left:833px;top:599px">2023-09-16 08:30-10:30</div>
<div class="tx" style="left:993px;top:599px">昌平区东小口镇接种...</div>
<div class="tx" style="left:1143px;top:599px">已...</div>
<div class="tx" style="left:1187px;top:599px">手...</div>
<div class="tag" style="left:1231px;top:590px;width:32px;background:#f0f9eb;border:1px solid #e1f3d8;border-right:0;color:#5daf34;border-radius:3px 0 0 3px">成功</div>
<div class="tx" style="left:1275px;top:599px">2023-09-14 11:26:26</div>
<svg style="left:1477px;top:603px" width="12" height="8" viewBox="0 0 12 8" fill="none" stroke="#5aa9f7" stroke-width="0.9"><path d="M0.5 4 Q6 -1.6 11.5 4 Q6 9.6 0.5 4Z"/><circle cx="6" cy="4" r="1.8"/></svg>
<div class="lk" style="left:1494px;top:599px">查看</div>
<svg style="left:1531px;top:601px" width="11" height="11" viewBox="0 0 11 11" fill="none" stroke="#5aa9f7" stroke-width="0.9" stroke-linejoin="round"><path d="M1.3 10 L1.5 7.2 L6.6 0.9 L8.7 2.6 L3.6 8.9Z"/><path d="M5.2 10.3 H10.2"/></svg>
<div class="lk" style="left:1547px;top:599px">撤销核销</div>
<svg style="left:1608px;top:601px" width="11" height="11" viewBox="0 0 11 11" fill="none" stroke="#5aa9f7" stroke-width="0.9" stroke-linejoin="round"><path d="M1.3 10 L1.5 7.2 L6.6 0.9 L8.7 2.6 L3.6 8.9Z"/><path d="M5.2 10.3 H10.2"/></svg>
<div class="lk" style="left:1624px;top:599px">补充核销</div>
<div class="tx" style="left:269px;top:639px">8</div>
<div class="cb" style="left:310px;top:640px"></div>
<div class="tx" style="left:349px;top:639px">录...</div>
<div class="tx" style="left:393px;top:639px">男</div>
<div class="tx" style="left:463px;top:639px">27</div>
<div class="tx" style="left:533px;top:639px">622120199608087777</div>
<div class="tx" style="left:683px;top:639px">四价流感病毒裂解疫...</div>
<div class="tx" style="left:833px;top:639px">2023-09-15 08:30-10:30</div>
<div class="tx" style="left:993px;top:639px">东城区特约接种点</div>
<div class="tx" style="left:1143px;top:639px">已...</div>
<div class="tx" style="left:1187px;top:639px">手...</div>
<div class="tag" style="left:1231px;top:630px;width:32px;background:#f0f9eb;border:1px solid #e1f3d8;border-right:0;color:#5daf34;border-radius:3px 0 0 3px">成功</div>
<div class="tx" style="left:1275px;top:639px">2023-09-14 11:09:39</div>
<svg style="left:1477px;top:643px" width="12" height="8" viewBox="0 0 12 8" fill="none" stroke="#5aa9f7" stroke-width="0.9"><path d="M0.5 4 Q6 -1.6 11.5 4 Q6 9.6 0.5 4Z"/><circle cx="6" cy="4" r="1.8"/></svg>
<div class="lk" style="left:1494px;top:639px">查看</div>
<svg style="left:1531px;top:641px" width="11" height="11" viewBox="0 0 11 11" fill="none" stroke="#5aa9f7" stroke-width="0.9" stroke-linejoin="round"><path d="M1.3 10 L1.5 7.2 L6.6 0.9 L8.7 2.6 L3.6 8.9Z"/><path d="M5.2 10.3 H10.2"/></svg>
<div class="lk" style="left:1547px;top:639px">撤销核销</div>
<svg style="left:1608px;top:641px" width="11" height="11" viewBox="0 0 11 11" fill="none" stroke="#5aa9f7" stroke-width="0.9" stroke-linejoin="round"><path d="M1.3 10 L1.5 7.2 L6.6 0.9 L8.7 2.6 L3.6 8.9Z"/><path d="M5.2 10.3 H10.2"/></svg>
<div class="lk" style="left:1624px;top:639px">补充核销</div>
<div class="tx" style="left:269px;top:679px">9</div>
<div class="cb" style="left:310px;top:680px"></div>
<div class="tx" style="left:349px;top:679px">测...</div>
<div class="tx" style="left:393px;top:679px">男</div>
<div class="tx" style="left:463px;top:679px">27</div>
<div class="tx" style="left:533px;top:679px">622120199602021313</div>
<div class="tx" style="left:683px;top:679px">四价流感病毒裂解疫...</div>
<div class="tx" style="left:833px;top:679px">2023-09-16 08:30-10:30</div>
<div class="tx" style="left:993px;top:679px">东城区特约接种点</div>
<div class="tx" style="left:1143px;top:679px">已...</div>
<div class="tx" style="left:1187px;top:679px">手...</div>
<div class="tag" style="left:1231px;top:670px;width:32px;background:#f0f9eb;border:1px solid #e1f3d8;border-right:0;color:#5daf34;border-radius:3px 0 0 3px">成功</div>
<div class="tx" style="left:1275px;top:679px">2023-09-14 10:43:24</div>
<svg style="left:1477px;top:683px" width="12" height="8" viewBox="0 0 12 8" fill="none" stroke="#5aa9f7" stroke-width="0.9"><path d="M0.5 4 Q6 -1.6 11.5 4 Q6 9.6 0.5 4Z"/><circle cx="6" cy="4" r="1.8"/></svg>
<div class="lk" style="left:1494px;top:679px">查看</div>
<svg style="left:1531px;top:681px" width="11" height="11" viewBox="0 0 11 11" fill="none" stroke="#5aa9f7" stroke-width="0.9" stroke-linejoin="round"><path d="M1.3 10 L1.5 7.2 L6.6 0.9 L8.7 2.6 L3.6 8.9Z"/><path d="M5.2 10.3 H10.2"/></svg>
<div class="lk" style="left:1547px;top:679px">撤销核销</div>
<svg style="left:1608px;top:681px" width="11" height="11" viewBox="0 0 11 11" fill="none" stroke="#5aa9f7" stroke-width="0.9" stroke-linejoin="round"><path d="M1.3 10 L1.5 7.2 L6.6 0.9 L8.7 2.6 L3.6 8.9Z"/><path d="M5.2 10.3 H10.2"/></svg>
<div class="lk" style="left:1624px;top:679px">补充核销</div>
<div class="tx" style="left:269px;top:719px">10</div>
<div class="cb" style="left:310px;top:720px"></div>
<div class="tx" style="left:349px;top:719px">王...</div>
<div class="tx" style="left:393px;top:719px">女</div>
<div class="tx" style="left:463px;top:719px">34</div>
<div class="tx" style="left:533px;top:719px">622301198908247860</div>
<div class="tx" style="left:683px;top:719px">四价流感病毒裂解疫...</div>
<div class="tx" style="left:833px;top:719px">2023-09-14 15:30-17:30</div>
<div class="tx" style="left:993px;top:719px">东城区特约接种点</div>
<div class="tx" style="left:1143px;top:719px">已...</div>
<div class="tx" style="left:1187px;top:719px">自...</div>
<div class="tag" style="left:1231px;top:710px;width:32px;background:#f0f9eb;border:1px solid #e1f3d8;border-right:0;color:#5daf34;border-radius:3px 0 0 3px">成功</div>
<div class="tx" style="left:1275px;top:719px">2023-09-13 10:21:51</div>
<svg style="left:1477px;top:723px" width="12" height="8" viewBox="0 0 12 8" fill="none" stroke="#5aa9f7" stroke-width="0.9"><path d="M0.5 4 Q6 -1.6 11.5 4 Q6 9.6 0.5 4Z"/><circle cx="6" cy="4" r="1.8"/></svg>
<div class="lk" style="left:1494px;top:719px">查看</div>
<svg style="left:1531px;top:721px" width="11" height="11" viewBox="0 0 11 11" fill="none" stroke="#5aa9f7" stroke-width="0.9" stroke-linejoin="round"><path d="M1.3 10 L1.5 7.2 L6.6 0.9 L8.7 2.6 L3.6 8.9Z"/><path d="M5.2 10.3 H10.2"/></svg>
<div class="lk" style="left:1547px;top:719px">撤销核销</div>
<svg style="left:1608px;top:721px" width="11" height="11" viewBox="0 0 11 11" fill="none" stroke="#5aa9f7" stroke-width="0.9" stroke-linejoin="round"><path d="M1.3 10 L1.5 7.2 L6.6 0.9 L8.7 2.6 L3.6 8.9Z"/><path d="M5.2 10.3 H10.2"/></svg>
<div class="lk" style="left:1624px;top:719px">补充核销</div>
</body></html>
